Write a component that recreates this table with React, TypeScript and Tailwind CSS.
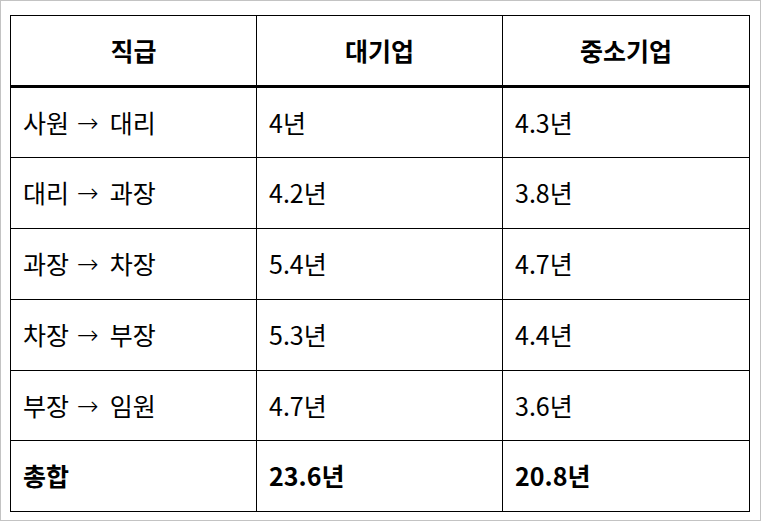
const rows: [string, string, string][] = [
  ["사원 → 대리", "4년", "4.3년"],
  ["대리 → 과장", "4.2년", "3.8년"],
  ["과장 → 차장", "5.4년", "4.7년"],
  ["차장 → 부장", "5.3년", "4.4년"],
  ["부장 → 임원", "4.7년", "3.6년"],
];

const rowHeights = ["h-[70px]", "h-[71px]", "h-[71px]", "h-[71px]", "h-[70px]"];

function Cell({ children, last = false, bold = false }: { children: React.ReactNode; last?: boolean; bold?: boolean }) {
  return (
    <div
      className={
        "flex items-center px-3 whitespace-pre " +
        (last ? "" : "border-r border-black ") +
        (bold ? "font-bold" : "")
      }
    >
      {children}
    </div>
  );
}

// the source font draws a thin, wide arrow
function Step({ label }: { label: string }) {
  const [from, to] = label.split(" → ");
  return (
    <span className="flex items-center">
      {from}
      <span className="ml-[8px] mr-[11px] font-['DejaVu_Sans'] font-extralight text-[26px] leading-none">→</span>
      {to}
    </span>
  );
}

export default function App() {
  return (
    <div
      className="w-[761px] h-[521px] border border-[#c3c3c3] bg-white pl-[9px] pt-[14px] text-black"
      style={{ fontFamily: '"Noto Sans CJK KR", sans-serif' }}
    >
      <div className="w-[740px] border border-black text-[25px]">
        <div className="grid grid-cols-[246px_246px_246px] h-[72px] border-b-[3px] border-black font-bold">
          <div className="flex items-center justify-center border-r border-black">직급</div>
          <div className="flex items-center justify-center border-r border-black">대기업</div>
          <div className="flex items-center justify-center">중소기업</div>
        </div>
        {rows.map((r, i) => (
          <div key={r[0]} className={"grid grid-cols-[246px_246px_246px] border-b border-black " + rowHeights[i]}>
            <Cell><Step label={r[0]} /></Cell>
            <Cell>{r[1]}</Cell>
            <Cell last>{r[2]}</Cell>
          </div>
        ))}
        <div className="grid grid-cols-[246px_246px_246px] h-[70px]">
          <Cell bold>총합</Cell>
          <Cell bold>23.6년</Cell>
          <Cell bold last>20.8년</Cell>
        </div>
      </div>
    </div>
  );
}
